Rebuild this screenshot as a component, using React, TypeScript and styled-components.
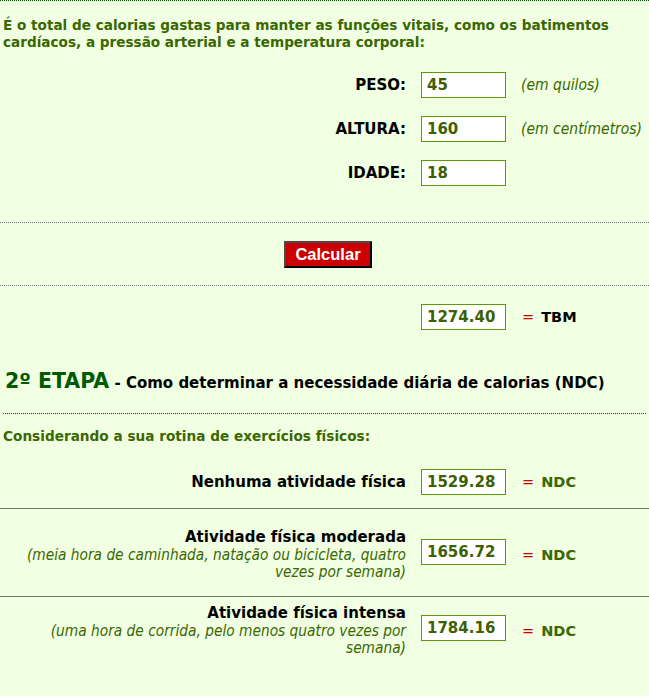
import React, { FC } from "react";
import styled, { createGlobalStyle } from "styled-components";

const GlobalStyle = createGlobalStyle`
  html, body {
    margin: 0;
    padding: 0;
    background: #f1ffe3;
  }
  body {
    font-family: "DejaVu Sans", Verdana, sans-serif;
  }
`;

const green = "#3b6700";
const darkGreen = "#005a00";
const narrow = `"DejaVu Sans Condensed", "DejaVu Sans", sans-serif`;

interface FieldRowProps {
  label: string;
  value: string;
  hint?: string;
}

const FieldRow: FC<FieldRowProps> = ({ label, value, hint }) => (
  <Row>
    <Label>{label}</Label>
    <ValueBox>{value}</ValueBox>
    <Hint>{hint}</Hint>
  </Row>
);

interface ActivityRowProps {
  title: string;
  note?: string;
  value: string;
  top: number;
  bottom: number;
  divided?: boolean;
}

const ActivityRow: FC<ActivityRowProps> = ({
  title,
  note,
  value,
  top,
  bottom,
  divided,
}) => (
  <ActivityLine $divided={divided} $top={top} $bottom={bottom}>
    <ActivityText>
      <ActivityTitle>{title}</ActivityTitle>
      {note && <ActivityNote>{note}</ActivityNote>}
    </ActivityText>
    <ValueBox $lift={note ? 3 : 0}>{value}</ValueBox>
    <Result>
      <Eq>=</Eq> NDC
    </Result>
  </ActivityLine>
);

const App: FC = () => (
  <Page>
    <GlobalStyle />
    <Intro>
      É o total de calorias gastas para manter as funções vitais, como os
      batimentos cardíacos, a pressão arterial e a temperatura corporal:
    </Intro>
    <Fields>
      <FieldRow label="PESO:" value="45" hint="(em quilos)" />
      <FieldRow label="ALTURA:" value="160" hint="(em centímetros)" />
      <FieldRow label="IDADE:" value="18" />
    </Fields>
    <ButtonBar>
      <CalcButton>Calcular</CalcButton>
    </ButtonBar>
    <TbmRow>
      <span />
      <ValueBox>1274.40</ValueBox>
      <TbmResult>
        <Eq>=</Eq> TBM
      </TbmResult>
    </TbmRow>
    <StepTitle>
      <StepNumber>2º ETAPA</StepNumber> - Como determinar a necessidade
      diária de calorias (NDC)
    </StepTitle>
    <Considering>Considerando a sua rotina de exercícios físicos:</Considering>
    <ActivityRow
      title="Nenhuma atividade física"
      value="1529.28"
      top={0}
      bottom={13}
    />
    <ActivityRow
      divided
      title="Atividade física moderada"
      note="(meia hora de caminhada, natação ou bicicleta, quatro vezes por semana)"
      value="1656.72"
      top={19}
      bottom={15}
    />
    <ActivityRow
      divided
      title="Atividade física intensa"
      note="(uma hora de corrida, pelo menos quatro vezes por semana)"
      value="1784.16"
      top={7}
      bottom={10}
    />
  </Page>
);

export default App;

const Page = styled.div`
  width: 649px;
  height: 696px;
  overflow: hidden;
  border-top: 1px dotted ${darkGreen};
  box-sizing: border-box;
`;

const Intro = styled.p`
  margin: 16px 6px 0 3px;
  color: ${green};
  font-weight: bold;
  font-size: 13.6px;
  line-height: 17px;
`;

const Fields = styled.div`
  display: flex;
  flex-direction: column;
  gap: 18px;
  padding: 21px 0 36px;
  border-bottom: 1px dotted #777;
`;

const Row = styled.div`
  display: grid;
  grid-template-columns: 406px 85px 1fr;
  column-gap: 15px;
  align-items: center;
`;

const Label = styled.div`
  text-align: right;
  font-weight: bold;
  font-size: 15px;
  color: #000;
`;

const ValueBox = styled.div<{ $lift?: number }>`
  height: 26px;
  box-sizing: border-box;
  border: 1px solid #5c9a00;
  background: #fff;
  color: #3d6000;
  font-weight: bold;
  font-size: 15px;
  line-height: 24px;
  padding-left: 5px;
  margin-bottom: ${(p) => (p.$lift ? p.$lift * 2 : 0)}px;
`;

const Hint = styled.div`
  color: ${green};
  font-family: ${narrow};
  font-style: italic;
  font-size: 15.5px;
`;

const ButtonBar = styled.div`
  display: flex;
  justify-content: center;
  padding: 18px 0 17px 7px;
  border-bottom: 1px dotted #777;
`;

const CalcButton = styled.button`
  width: 88px;
  height: 27px;
  background: #cc0000;
  color: #fff;
  font-family: "Liberation Sans", Arial, sans-serif;
  font-weight: bold;
  font-size: 16.5px;
  border: 2px solid;
  border-color: #4a4a4a #000 #000 #4a4a4a;
  padding: 0;
`;

const TbmRow = styled(Row)`
  padding: 18px 0 39px;
`;

const Eq = styled.span`
  color: #cc0000;
  font-weight: normal;
  margin-right: 2px;
`;

const TbmResult = styled.div`
  font-weight: bold;
  font-size: 14.5px;
  color: #000;
  padding-left: 1px;
`;

const Result = styled(TbmResult)`
  color: ${green};
`;

const StepTitle = styled.div`
  margin: 0 3px;
  padding: 0 0 18px 2px;
  font-weight: bold;
  font-size: 15px;
  line-height: 24px;
  color: #000;
  border-bottom: 1px dotted ${darkGreen};
`;

const StepNumber = styled.span`
  font-size: 20.5px;
  color: ${darkGreen};
`;

const Considering = styled.div`
  margin: 14px 3px 24px;
  color: ${green};
  font-weight: bold;
  font-size: 13.65px;
  line-height: 17px;
`;

const ActivityLine = styled(Row)<{
  $divided?: boolean;
  $top: number;
  $bottom: number;
}>`
  padding: ${(p) => `${p.$top}px 0 ${p.$bottom}px`};
  border-top: ${(p) => (p.$divided ? "1px solid #6b7866" : "none")};
`;

const ActivityText = styled.div`
  text-align: right;
  padding-left: 10px;
`;

const ActivityTitle = styled.div`
  font-weight: bold;
  font-size: 15px;
  color: #000;
  line-height: 19px;
`;

const ActivityNote = styled.div`
  font-family: ${narrow};
  font-style: italic;
  font-size: 15.3px;
  color: ${green};
  line-height: 17px;
`;
